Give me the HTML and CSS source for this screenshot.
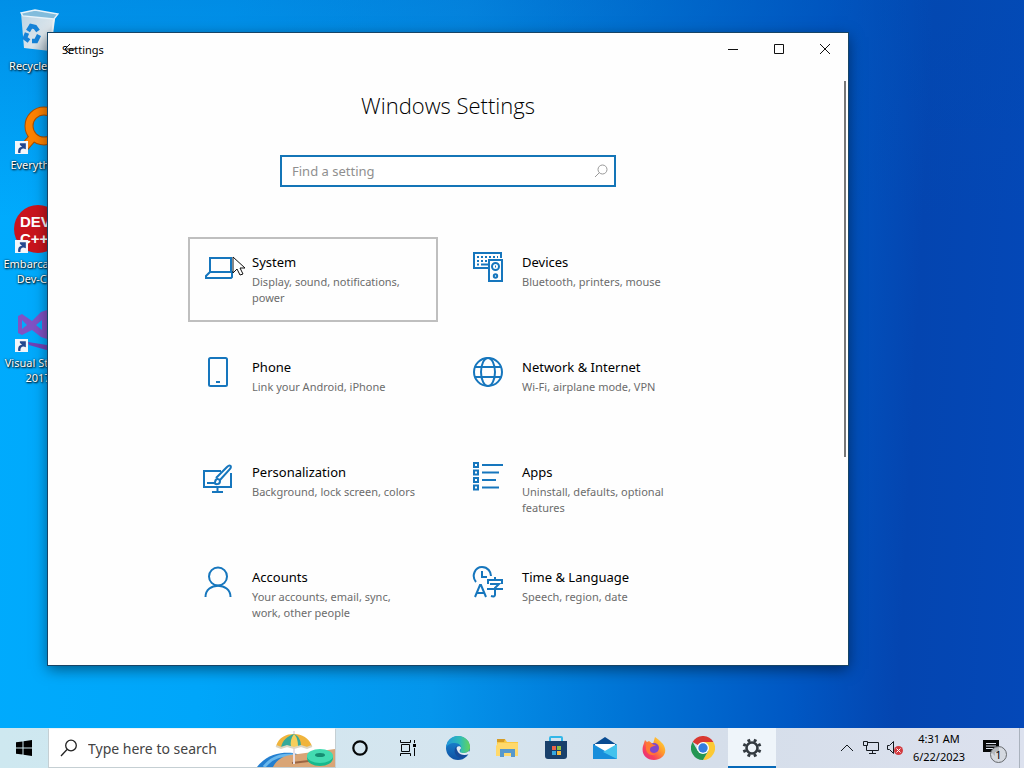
FILE: index.html
```html
<!DOCTYPE html>
<html lang="en">
<head>
<meta charset="utf-8">
<title>Settings</title>
<link rel="stylesheet" href="styles.css">
</head>
<body>
<svg class="defs" aria-hidden="true">
  <defs>
    <linearGradient id="bin" x1="0" y1="0" x2="1" y2="1"><stop offset="0" stop-color="#b9d3e4"/><stop offset=".6" stop-color="#dde6ec"/><stop offset="1" stop-color="#9db0be"/></linearGradient>
    <linearGradient id="edgeBlue" x1="0" y1="0" x2="0" y2="1"><stop offset="0" stop-color="#1b8fd8"/><stop offset="1" stop-color="#0f4fa2"/></linearGradient>
    <linearGradient id="edgeTop" x1="0" y1="0" x2="1" y2="0"><stop offset="0" stop-color="#2097dd"/><stop offset=".6" stop-color="#30bdb4"/><stop offset="1" stop-color="#65d45a"/></linearGradient>
    <linearGradient id="fox" x1="1" y1="0" x2="0" y2="1"><stop offset="0" stop-color="#ffe93e"/><stop offset=".4" stop-color="#ff9a2b"/><stop offset=".7" stop-color="#f9425c"/><stop offset="1" stop-color="#dc2a8c"/></linearGradient>
    <symbol id="shortcut" viewBox="0 0 12 12"><rect width="12" height="12" fill="#f3f6fa"/><path d="M3 11C2.500 7 4 5.500 6.500 5.500L4.500 3.500 4.500 2H10V7.500L8 7C5.500 7 5 8.500 5 11Z" fill="#24488f"/></symbol>
  </defs>
</svg>

<main class="desktop">
  <nav class="shortcuts" aria-label="Desktop">
    <a class="shortcut" href="#">
      <svg class="shortcut-icon" viewBox="0 0 48 48"><path d="M7 6 41 9 36 44 10 41Z" fill="url(#bin)"/><path d="M7 6 21 3 44 7 40 12 9 9Z" fill="#82bcdc" stroke="#e8f3fa" stroke-width="1.300"/><path d="M40 12 36 44" stroke="#edf3f6" stroke-width="2"/><g fill="none" stroke="#1683d8" stroke-width="4.500"><path d="m14 24 3-5 4 1 3 4"/><path d="m25 28-3 6h-4"/><path d="m15 34-4-3 2-5"/></g></svg>
      <span>Recycle Bin</span>
    </a>
    <a class="shortcut" href="#">
      <svg class="shortcut-icon" viewBox="0 0 48 48"><path d="M21 29 8 44" stroke="#a94e00" stroke-width="9"/><circle cx="30" cy="20" r="15" fill="none" stroke="#a94e00" stroke-width="9"/><circle cx="30" cy="20" r="15" fill="none" stroke="#ff8200" stroke-width="7"/><path d="M21 29 8 44" stroke="#ff8200" stroke-width="7"/><use href="#shortcut" x="1" y="35" width="13" height="13"/></svg>
      <span>Everything</span>
    </a>
    <a class="shortcut" href="#">
      <svg class="shortcut-icon" viewBox="0 0 48 48"><circle cx="24" cy="24" r="24" fill="#c9141d"/><text class="dev-mark" x="6" y="22">DEV</text><text class="dev-mark" x="6" y="39">C++</text><use href="#shortcut" x="1" y="35" width="13" height="13"/></svg>
      <span>Embarcadero<br>Dev-C++</span>
    </a>
    <a class="shortcut" href="#">
      <svg class="shortcut-icon" viewBox="0 0 48 48"><path d="M4 12 8 10 18 17 27 8 33 6V35L27 33 18 26 8 31 4 29ZM8 16V25L13 21ZM22 21 28 26V16Z" fill="#8152c4" fill-rule="evenodd"/><path d="M14 38 33 41 38 3 46 7V42L36 47 15 41Z" fill="#7141b7"/><use href="#shortcut" x="1" y="35" width="13" height="13"/></svg>
      <span>Visual Studio<br>2017</span>
    </a>
  </nav>

  <section class="window" aria-label="Settings">
    <header class="titlebar">
      <div class="titlebar-name">Settings
        <button class="back" aria-label="Back"><svg viewBox="0 0 12 12"><path d="M11.500 6H1M6 1 1 6l5 5"/></svg></button>
      </div>
      <div class="window-buttons">
        <button aria-label="Minimize"><svg viewBox="0 0 12 12"><path d="M1 6.500h10"/></svg></button>
        <button aria-label="Maximize"><svg viewBox="0 0 12 12"><path d="M1.500 1.500h9v9h-9z"/></svg></button>
        <button aria-label="Close"><svg viewBox="0 0 12 12"><path d="m1 1 10 10M11 1 1 11"/></svg></button>
      </div>
    </header>
    <div class="content">
      <h1>Windows Settings</h1>
      <label class="find">
        <input type="text" placeholder="Find a setting" aria-label="Find a setting">
        <svg viewBox="0 0 14 14"><circle cx="8.500" cy="5.500" r="4.500"/><path d="M5.500 8.500 1 13"/></svg>
      </label>
      <div class="categories">
        <a class="category hovered" href="#">
          <svg viewBox="0 0 32 32"><path d="M8 7h21v14H8zM8 21l-4 4v2h25l1-1v-5z"/></svg>
          <span><strong>System</strong><small>Display, sound, notifications, power</small></span>
        </a>
        <a class="category" href="#">
          <svg viewBox="0 0 32 32"><path d="M16 17H2V2h27v5"/><path d="M5 6h21M5 10h11" stroke-dasharray="2 2"/><path d="M5 13.500h2m2 0h7"/><path d="M17 9h13v21H17z"/><circle cx="23.500" cy="15.500" r="3.500"/><circle cx="23.500" cy="25" r="1.700"/><path d="M23 15.500h1"/></svg>
          <span><strong>Devices</strong><small>Bluetooth, printers, mouse</small></span>
        </a>
        <a class="category" href="#">
          <svg viewBox="0 0 32 32"><rect x="7" y="2" width="18" height="28" rx="1.500"/><path d="M14 26h4"/></svg>
          <span><strong>Phone</strong><small>Link your Android, iPhone</small></span>
        </a>
        <a class="category" href="#">
          <svg viewBox="0 0 32 32"><circle cx="16" cy="16" r="14"/><ellipse cx="16" cy="16" rx="7" ry="14"/><path d="M3 11h26M3 21h26"/></svg>
          <span><strong>Network &amp; Internet</strong><small>Wi-Fi, airplane mode, VPN</small></span>
        </a>
        <a class="category" href="#">
          <svg viewBox="0 0 32 32"><path d="M19 10H2v16h27V12M10 31h11M15.500 26v5M5 22h8c0-5 4-5 5-2 0 4-5 4-6 1M14 17 25 6c3-3 5-1 3 2L18 19"/></svg>
          <span><strong>Personalization</strong><small>Background, lock screen, colors</small></span>
        </a>
        <a class="category" href="#">
          <svg viewBox="0 0 32 32"><path d="M2 2h4v4H2zM2 9.500h4v4H2zM2 17h4v4H2zM2 24.500h4v4H2zM10 4h21M10 11.500h17M10 19h14M10 26.500h17"/></svg>
          <span><strong>Apps</strong><small>Uninstall, defaults, optional features</small></span>
        </a>
        <a class="category" href="#">
          <svg viewBox="0 0 32 32"><circle cx="16" cy="10.500" r="9"/><path d="M3.500 31c0-15 25-15 25 0"/></svg>
          <span><strong>Accounts</strong><small>Your accounts, email, sync, work, other people</small></span>
        </a>
        <a class="category" href="#">
          <svg viewBox="0 0 32 32"><path d="M4 16C-1 10 3 1 10 1c6 0 9 5 9 9M10 5v6h5M3 31l5-12h1l5 12M5 27h7"/><path d="M16 18v-4h14v4M23 11v3M18 18h9l-4 4v7c0 1-1 2-4 1M15 23h16"/></svg>
          <span><strong>Time &amp; Language</strong><small>Speech, region, date</small></span>
        </a>
      </div>
    </div>
    <div class="scroll-thumb"></div>
  </section>
  <svg class="pointer" viewBox="0 0 13 20" aria-hidden="true"><path d="M1 1v16l4-4 3 6 3-1-3-6h5z"/></svg>
</main>

<footer class="taskbar">
  <button class="start" aria-label="Start"><svg viewBox="0 0 16 16"><path d="M0 2.300 6.500 1.400V7.500H0ZM7.500 1.200 16 0v7.500H7.500ZM0 8.500h6.500v6.100L0 13.700ZM7.500 8.500H16V16l-8.500-1.200Z"/></svg></button>
  <label class="taskbar-search">
    <svg class="glass" viewBox="0 0 18 18"><circle cx="11" cy="6.500" r="5.300"/><path d="M7 10.500 1 17"/></svg>
    <input type="text" placeholder="Type here to search" aria-label="Type here to search">
    <svg class="beach" viewBox="0 0 78 38"><path d="M0 38C10 25 24 23 36 24l20 5-12 9Z" fill="#237fd0"/><path d="M7 38c9-11 18-12 29-12" fill="none" stroke="#6ab8ec" stroke-width="3"/><path d="M16 38c5-10 14-12 25-13l37-5v18Z" fill="#d9a576"/><path d="m35 34 25-3" stroke="#9a6543" stroke-width="2"/><ellipse cx="63" cy="29" rx="13" ry="8" fill="#16b98d"/><ellipse cx="63" cy="27" rx="13" ry="7" fill="#43dbb1"/><ellipse cx="63" cy="26" rx="5" ry="2" fill="#168d72"/><path d="M37 2v33" stroke="#e8dfe5" stroke-width="2"/><path d="M19 17C22 8 29 5 37 5s15 4 18 12l-5 2-6-2-7 2-7-2-6 2Z" fill="#f0b43c"/><path d="M24 19C25 11 31 7 37 5c-5 4-7 9-7 12ZM37 5c5 2 7 7 7 12l-7 2-7-2c0-5 3-10 7-12Z" fill="#35a99a"/><path d="M37 5c-3 4-4 8-3 13l3 1 4-1c0-6-1-10-4-13Z" fill="#f5ce5b"/><path d="m19 17 5 2 6-2 7 2 7-2 6 2 5-2" fill="none" stroke="#dcd5c2" stroke-width="2"/></svg>
  </label>
  <nav class="apps" aria-label="Taskbar">
    <button aria-label="Cortana"><svg viewBox="0 0 24 24"><circle cx="12" cy="12" r="6.700" fill="none" stroke="#050708" stroke-width="2.200"/></svg></button>
    <button aria-label="Task View"><svg viewBox="0 0 24 24"><path d="M3.500 4v2.500h10V4M3.500 20v-2.500h10V20M4.500 8.500h8v7h-8zM17.500 4v3m0 5v8" fill="none" stroke="#050708"/><path d="M16 8h3v3h-3z"/></svg></button>
    <button aria-label="Edge"><svg viewBox="0 0 24 24"><circle cx="12" cy="12" r="12" fill="url(#edgeBlue)"/><path d="M0 12C1 4 6 0 12 0c8 0 12 6 12 11 0 4-3 6-7 6-4 0-3-2-2-4 1-3-2-6-6-6-5 0-8 2-9 5Z" fill="url(#edgeTop)"/><path d="M11 10C7 13 8 20 14 22c4 0 7-2 9-5-2 1-5 2-8 1-3-2-5-5-4-8Z" fill="#174b99"/><path d="M11 11c1-1 4-1 4 1 0 1-2 2-1 4 2 2 7 1 9-1l1 1-1 2c-4 2-9 1-11-2-1-2-2-4-1-5Z" fill="#e1ebf2"/></svg></button>
    <button aria-label="File Explorer"><svg viewBox="0 0 24 24"><path d="M2 3h8l2 3h11v14H2Z" fill="#f9c943"/><path d="M2 3h8l-1 3H2Z" fill="#d59b25"/><path d="M3 7h20v13H1V10Z" fill="#ffd96b"/><path d="M5 21v-8h15v8h-4v-4H9v4Z" fill="#5798cb"/></svg></button>
    <button aria-label="Microsoft Store"><svg viewBox="0 0 24 24"><path d="M6 6V2q0-1 1-1h10q1 0 1 1v4" fill="none" stroke="#33b7e8" stroke-width="2"/><path d="M1 5h22v15q0 3-3 3H4q-3 0-3-3Z" fill="#19406b"/><path d="M8 10h4v4H8z" fill="#ee6448"/><path d="M13 10h4v4h-4z" fill="#8fbf44"/><path d="M8 15h4v4H8z" fill="#37a9df"/><path d="M13 15h4v4h-4z" fill="#f5b93c"/></svg></button>
    <button aria-label="Mail"><svg viewBox="0 0 24 24"><path d="m0 9 12-8 12 8v4H0Z" fill="#084b91"/><path d="M2 8h20v6l-10 5-10-5Z" fill="#fff"/><path d="m0 8 24 14v1H0Z" fill="#188edb"/><path d="M24 8 10 16l14 7Z" fill="#43c2ed"/></svg></button>
    <button aria-label="Firefox"><svg viewBox="0 0 24 24"><path d="M1 10 3 4l2 2 2-1 4 3 2-7 4 3 4 4c6 9-1 16-9 16C4 24-1 18 1 10Z" fill="url(#fox)"/><circle cx="12" cy="12" r="5" fill="#8147cc"/><path d="M4 7c4-2 6 2 10 2-3 2-6 1-6 5 0 3 4 5 7 3-5 5-12 0-11-6Z" fill="#ff7834"/></svg></button>
    <button aria-label="Chrome"><svg viewBox="0 0 24 24"><path d="M12 12 1.600 6A12 12 0 0 1 22.400 6H12Z" fill="#d93831"/><path d="M22.400 6A12 12 0 0 1 12 24l5.200-9L12 6Z" fill="#fcc934"/><path d="M12 24A12 12 0 0 1 1.600 6l5.200 9 10.400 0Z" fill="#249653"/><circle cx="12" cy="12" r="6" fill="#fff"/><circle cx="12" cy="12" r="4.700" fill="#347de0"/></svg></button>
    <button class="active" aria-label="Settings"><svg viewBox="0 0 24 24"><circle cx="12" cy="12" r="5.500" fill="none" stroke="#333a40" stroke-width="2.600"/><g stroke="#333a40" stroke-width="3"><path d="m9.500 6-1.200-2.700M14.500 6l1.200-2.700M18 9.500l2.700-1.200M18 14.500l2.700 1.200M14.500 18l1.200 2.700M9.500 18l-1.200 2.700M6 14.500l-2.700 1.200M6 9.500 3.300 8.300"/></g></svg></button>
  </nav>
  <div class="tray">
    <button aria-label="Show hidden icons"><svg viewBox="0 0 16 16"><path d="m2 11 6-6 6 6"/></svg></button>
    <button aria-label="Network"><svg viewBox="0 0 16 16"><path d="M5 2.500h10.500v8H3.500V6M9.500 10.500v3M6 13.500h7M.500 1.500h4v4h-4z"/></svg></button>
    <button aria-label="Volume"><svg viewBox="0 0 16 16"><path d="M.500 5.500h2l4-4v12l-4-4h-2z"/><circle cx="11.500" cy="10.500" r="4.500" fill="#d33b40" stroke="none"/><path d="m9.500 8.500 4 4m0-4-4 4" stroke="#fff"/></svg></button>
    <div class="clock"><time>4:31 AM</time><time>6/22/2023</time></div>
    <button class="notifications" aria-label="Notifications, 1 new"><svg viewBox="0 0 16 16"><path d="M0 0h16v12h-4v4l-4-4H0Z" fill="#050708" stroke="none"/><path d="M3 3.500h10M3 6h10M3 8.500h7" stroke="#dce2ed"/></svg><span class="badge">1</span></button>
    <button class="show-desktop" aria-label="Show desktop"></button>
  </div>
</footer>
</body>
</html>
```
FILE: styles.css
```css
* { box-sizing: border-box; }

body {
  margin: 0;
  height: 100vh;
  overflow: hidden;
  display: flex;
  flex-direction: column;
  font-family: "Noto Sans", "Open Sans", sans-serif;
  color: #000;
}

button {
  padding: 0;
  border: 0;
  background: none;
  font: inherit;
  display: flex;
  align-items: center;
  justify-content: center;
}

a { color: inherit; text-decoration: none; }
svg { display: block; flex: none; }
.defs { position: absolute; width: 0; height: 0; }

.desktop {
  position: relative;
  flex: 1;
  min-height: 0;
  overflow: hidden;
  background:
    linear-gradient(180deg, rgba(0, 80, 180, 0.300) 0, rgba(0, 80, 180, 0) 30%),
    linear-gradient(93deg, #00abfd 0%, #00a6fa 22%, #0596ec 44%, #0075d6 62%, #0058c4 78%, #0445b0 88%, #0448b8 100%);
}

.shortcuts {
  display: flex;
  flex-direction: column;
  width: 76px;
}
.shortcut {
  display: flex;
  flex-direction: column;
  align-items: center;
  gap: 3px;
  height: 99px;
  padding-top: 7px;
  font-size: 11px;
  line-height: 15px;
  text-align: center;
  white-space: nowrap;
  color: #fff;
  text-shadow: 1px 1px 2px #000, 0 0 2px rgba(0, 0, 0, 0.800);
}
.shortcut-icon { width: 48px; height: 48px; }
.dev-mark {
  font: 700 15px "Liberation Sans", sans-serif;
  fill: #fff;
  text-shadow: none;
}

.window {
  position: absolute;
  left: 48px;
  top: 33px;
  right: 176px;
  bottom: 63px;
  background: #fefefe;
  outline: 1px solid #174466;
  box-shadow: 0 4px 14px rgba(0, 0, 0, 0.500);
  overflow: hidden;
}
.titlebar {
  display: flex;
  justify-content: space-between;
  height: 32px;
}
.titlebar-name {
  position: relative;
  padding-left: 14px;
  font-size: 11px;
  line-height: 34px;
}
.back { position: absolute; left: 16px; top: 10px; }
.back svg { width: 12px; height: 12px; }
.window-buttons { display: flex; }
.window-buttons button { width: 46px; }
.window-buttons svg { width: 12px; height: 12px; }
.titlebar svg { fill: none; stroke: #111; stroke-width: 1; }

.content {
  display: flex;
  flex-direction: column;
  align-items: center;
}
h1 {
  margin: 24px 0 33px;
  font-family: "Open Sans", "Noto Sans", sans-serif;
  font-weight: 300;
  font-size: 22px;
  line-height: 33px;
}
.find {
  display: flex;
  align-items: center;
  width: 336px;
  height: 32px;
  padding: 0 6px 0 10px;
  border: 2px solid #1475b7;
  background: #fff;
}
.find input, .taskbar-search input {
  flex: 1;
  min-width: 0;
  padding: 0;
  border: 0;
  outline: 0;
  background: none;
  font: inherit;
}
.find input { font-size: 13px; }
.find input::placeholder { color: #8f8f8f; opacity: 1; }
.find svg { width: 14px; height: 14px; fill: none; stroke: #999; }

.categories {
  display: grid;
  grid-template-columns: 250px 250px;
  grid-auto-rows: 85px;
  gap: 20px;
  margin-top: 50px;
}
.category {
  display: flex;
  gap: 18px;
  padding: 12px 20px 0 12px;
  border: 2px solid transparent;
}
.category.hovered { border-color: #bfbfbf; }
.category svg {
  width: 32px;
  height: 32px;
  fill: none;
  stroke: #1676bd;
  stroke-width: 2;
}
.category strong {
  display: block;
  padding-top: 1px;
  margin-bottom: 2px;
  font-weight: 400;
  font-size: 13px;
  line-height: 20px;
}
.category small {
  display: block;
  font-size: 11px;
  line-height: 16px;
  color: #6c6c6c;
}
.scroll-thumb {
  position: absolute;
  right: 2px;
  top: 48px;
  width: 2px;
  height: 376px;
  background: #777;
}
.pointer {
  position: absolute;
  left: 232px;
  top: 256px;
  width: 13px;
  height: 20px;
  fill: #fff;
  stroke: #111;
}

.taskbar {
  display: flex;
  height: 40px;
  background: linear-gradient(90deg, #cee8f0, #d5e5ef 45%, #d5deea 70%, #dce1ee);
}
.start { width: 48px; }
.start svg { width: 16px; height: 16px; }
.taskbar-search {
  position: relative;
  display: flex;
  align-items: center;
  gap: 10px;
  width: 288px;
  padding-left: 11px;
  background: #fff;
  border: 1px solid #c5cfd3;
  border-top-color: #edf5f8;
  font-size: 14px;
}
.taskbar-search input::placeholder { color: #444; opacity: 1; }
.glass { width: 18px; height: 18px; fill: none; stroke: #222; stroke-width: 1.300; }
.beach { position: absolute; right: 0; bottom: 0; width: 78px; height: 38px; }
.apps { display: flex; flex: 1; gap: 1px; }
.apps button { width: 48px; }
.apps svg { width: 24px; height: 24px; }
.apps .active { background: #eff5fa; box-shadow: inset 0 -2px #0669b8; }

.tray { display: flex; }
.tray > button { width: 24px; }
.tray svg { width: 16px; height: 16px; fill: none; stroke: #151a20; }
.clock {
  display: flex;
  flex-direction: column;
  justify-content: center;
  align-items: center;
  width: 64px;
  font-size: 11px;
  line-height: 18px;
}
.tray > .notifications { position: relative; width: 48px; padding-right: 8px; }
.badge {
  position: absolute;
  left: 19px;
  top: 18px;
  width: 17px;
  height: 17px;
  border: 1px solid #66696d;
  border-radius: 50%;
  background: rgba(211, 215, 221, 0.850);
  font-size: 11px;
  line-height: 15px;
  text-align: center;
}
.tray > .show-desktop { width: 5px; border-left: 1px solid #aab2bd; }
```
